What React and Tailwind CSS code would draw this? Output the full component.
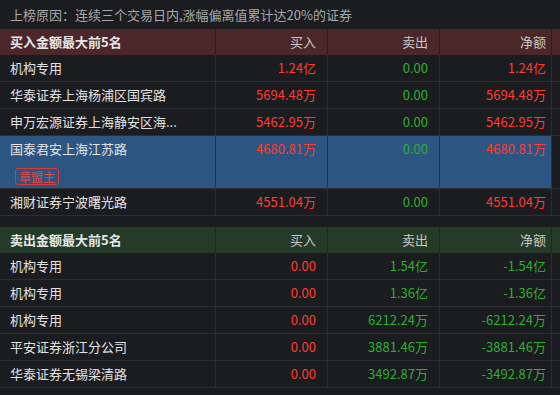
import React from "react";

const buy = [
  { name: "机构专用", b: "1.24亿", s: "0.00", n: "1.24亿" },
  { name: "华泰证券上海杨浦区国宾路", b: "5694.48万", s: "0.00", n: "5694.48万" },
  { name: "申万宏源证券上海静安区海...", b: "5462.95万", s: "0.00", n: "5462.95万" },
  { name: "国泰君安上海江苏路", b: "4680.81万", s: "0.00", n: "4680.81万", hl: true, badge: "章盟主" },
  { name: "湘财证券宁波曙光路", b: "4551.04万", s: "0.00", n: "4551.04万" },
];

const sell = [
  { name: "机构专用", b: "0.00", s: "1.54亿", n: "-1.54亿" },
  { name: "机构专用", b: "0.00", s: "1.36亿", n: "-1.36亿" },
  { name: "机构专用", b: "0.00", s: "6212.24万", n: "-6212.24万" },
  { name: "平安证券浙江分公司", b: "0.00", s: "3881.46万", n: "-3881.46万" },
  { name: "华泰证券无锡梁清路", b: "0.00", s: "3492.87万", n: "-3492.87万" },
];

const font = { fontFamily: '"Noto Sans CJK SC", "Noto Sans", sans-serif' };

function Header({ title, bg, line }) {
  return (
    <div className={`grid grid-cols-[216px_112px_112px_112px_8px] h-[26px] ${bg} text-[13px]`}>
      <div className={`flex items-center pl-[10px] font-bold text-[#e6e6e6] border-r ${line}`}>{title}</div>
      <div className={`flex items-center justify-end pr-[11px] text-[#c8c8c8] border-r ${line}`}>买入</div>
      <div className={`flex items-center justify-end pr-[11px] text-[#c8c8c8] border-r ${line}`}>卖出</div>
      <div className={`flex items-center justify-end pr-[5px] text-[#c8c8c8] border-r ${line}`}>净额</div>
      <div></div>
    </div>
  );
}

function Row({ r, bc, sc, nc }) {
  const bg = r.hl ? "bg-[#2c5681]" : "bg-[#1b1c20]";
  const line = r.hl ? "border-[#22324a]" : "border-[#2c2e33]";
  return (
    <div className={`grid grid-cols-[216px_112px_112px_112px_8px] ${r.hl ? "h-[53px]" : "h-[27px]"} border-b border-[#2c2e33] text-[13px]`}>
      <div className={`${bg} border-r ${line} pl-[10px] flex flex-col ${r.hl ? "pt-[4px]" : "justify-center"}`}>
        <span className="text-[#e2e2e2] leading-[18px]">{r.name}</span>
        {r.badge && (
          <span className="mt-[10px] ml-[5px] self-start border border-[#d93a3a] text-[#e04646] rounded-[3px] text-[12px] leading-[15px] px-[3px]">
            {r.badge}
          </span>
        )}
      </div>
      <div className={`${bg} border-r ${line} pr-[11px] flex justify-end ${r.hl ? "pt-[4px]" : "items-center"} ${bc}`}>
        <span className="leading-[18px]">{r.b}</span>
      </div>
      <div className={`${bg} border-r ${line} pr-[11px] flex justify-end ${r.hl ? "pt-[4px]" : "items-center"} ${sc}`}>
        <span className="leading-[18px]">{r.s}</span>
      </div>
      <div className={`${bg} border-r ${line} pr-[5px] flex justify-end ${r.hl ? "pt-[4px]" : "items-center"} ${nc}`}>
        <span className="leading-[18px]">{r.n}</span>
      </div>
      <div className="bg-[#1b1c20]"></div>
    </div>
  );
}

export default function App() {
  return (
    <div className="w-[560px] h-[395px] bg-[#1b1c20] overflow-hidden" style={font}>
      <div className="h-[29px] flex items-center pl-[10px] text-[13px] text-[#a6a8ab]">
        上榜原因：连续三个交易日内,涨幅偏离值累计达20%的证券
      </div>
      <Header title="买入金额最大前5名" bg="bg-[#4b2729]" line="border-[#2f1a1c]" />
      {buy.map((r, i) => (
        <Row key={i} r={r} bc="text-[#ff3b30]" sc="text-[#2fae2f]" nc="text-[#ff3b30]" />
      ))}
      <div className="h-[11px]"></div>
      <Header title="卖出金额最大前5名" bg="bg-[#243b29]" line="border-[#1b2a1e]" />
      {sell.map((r, i) => (
        <Row key={i} r={r} bc="text-[#ff3b30]" sc="text-[#2fae2f]" nc="text-[#2fae2f]" />
      ))}
    </div>
  );
}
